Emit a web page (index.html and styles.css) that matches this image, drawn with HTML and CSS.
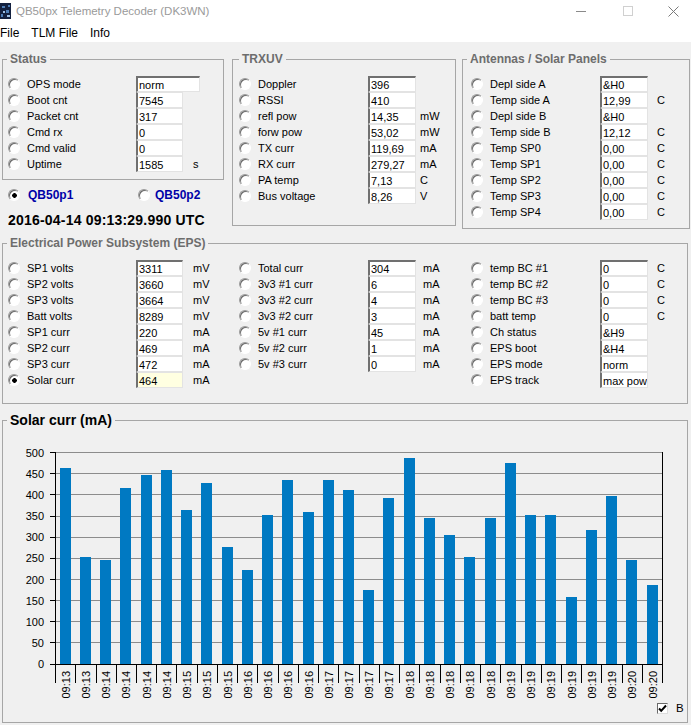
FILE: index.html
```html
<!DOCTYPE html>
<html lang="en">
<head>
<meta charset="utf-8">
<title>QB50px Telemetry Decoder (DK3WN)</title>
<link rel="stylesheet" href="styles.css">
</head>
<body>
<header class="titlebar">
  <svg class="appicon" width="14" height="18" viewBox="0 0 14 18">
    <rect x="0" y="1" width="11" height="16" fill="#14213f"/>
    <path d="M2 4h3v2H2zM6 8h3v3H6zM1 12h2v3H1zM8 3h2v2H8z" fill="#4f7fb8"/>
    <path d="M3 9h2v2H3zM7 13h3v2H7z" fill="#9fc0e4"/>
  </svg>
  <span class="title">QB50px Telemetry Decoder (DK3WN)</span>
  <div class="winctrls">
    <svg class="wc-min" width="10" height="10" viewBox="0 0 10 10"><path d="M0 5.5H10" stroke="#8a8a8a"/></svg>
    <svg class="wc-max" width="10" height="10" viewBox="0 0 10 10"><rect x=".5" y=".5" width="9" height="9" fill="none" stroke="#d0d0d0"/></svg>
    <svg class="wc-close" width="11" height="11" viewBox="0 0 11 11"><path d="M.5.5l10 10M10.5.5l-10 10" stroke="#7a7a7a"/></svg>
  </div>
</header>
<nav class="menubar"><span>File</span><span>TLM File</span><span>Info</span></nav>

<main class="form">
  <div class="toprow">
    <div class="leftcol">
      <fieldset class="group g-status">
        <legend>Status</legend>
        <div class="rows">
          <div class="row"><span class="radio"></span><span class="lbl">OPS mode</span><span class="fld wide">norm</span></div>
          <div class="row"><span class="radio"></span><span class="lbl">Boot cnt</span><span class="fld">7545</span></div>
          <div class="row"><span class="radio"></span><span class="lbl">Packet cnt</span><span class="fld">317</span></div>
          <div class="row"><span class="radio"></span><span class="lbl">Cmd rx</span><span class="fld">0</span></div>
          <div class="row"><span class="radio"></span><span class="lbl">Cmd valid</span><span class="fld">0</span></div>
          <div class="row"><span class="radio"></span><span class="lbl">Uptime</span><span class="fld">1585</span><span class="unit">s</span></div>
        </div>
      </fieldset>
      <div class="sats">
        <div class="sat"><span class="radio on"></span><span class="satname">QB50p1</span></div>
        <div class="sat"><span class="radio"></span><span class="satname">QB50p2</span></div>
      </div>
      <div class="stamp">2016-04-14 09:13:29.990 UTC</div>
    </div>

    <fieldset class="group g-trx">
      <legend>TRXUV</legend>
      <div class="rows">
        <div class="row"><span class="radio"></span><span class="lbl">Doppler</span><span class="fld">396</span></div>
        <div class="row"><span class="radio"></span><span class="lbl">RSSI</span><span class="fld">410</span></div>
        <div class="row"><span class="radio"></span><span class="lbl">refl pow</span><span class="fld">14,35</span><span class="unit">mW</span></div>
        <div class="row"><span class="radio"></span><span class="lbl">forw pow</span><span class="fld">53,02</span><span class="unit">mW</span></div>
        <div class="row"><span class="radio"></span><span class="lbl">TX curr</span><span class="fld">119,69</span><span class="unit">mA</span></div>
        <div class="row"><span class="radio"></span><span class="lbl">RX curr</span><span class="fld">279,27</span><span class="unit">mA</span></div>
        <div class="row"><span class="radio"></span><span class="lbl">PA temp</span><span class="fld">7,13</span><span class="unit">C</span></div>
        <div class="row"><span class="radio"></span><span class="lbl">Bus voltage</span><span class="fld">8,26</span><span class="unit">V</span></div>
      </div>
    </fieldset>

    <fieldset class="group g-ant">
      <legend>Antennas / Solar Panels</legend>
      <div class="rows">
        <div class="row"><span class="radio"></span><span class="lbl">Depl side A</span><span class="fld">&amp;H0</span></div>
        <div class="row"><span class="radio"></span><span class="lbl">Temp side A</span><span class="fld">12,99</span><span class="unit">C</span></div>
        <div class="row"><span class="radio"></span><span class="lbl">Depl side B</span><span class="fld">&amp;H0</span></div>
        <div class="row"><span class="radio"></span><span class="lbl">Temp side B</span><span class="fld">12,12</span><span class="unit">C</span></div>
        <div class="row"><span class="radio"></span><span class="lbl">Temp SP0</span><span class="fld">0,00</span><span class="unit">C</span></div>
        <div class="row"><span class="radio"></span><span class="lbl">Temp SP1</span><span class="fld">0,00</span><span class="unit">C</span></div>
        <div class="row"><span class="radio"></span><span class="lbl">Temp SP2</span><span class="fld">0,00</span><span class="unit">C</span></div>
        <div class="row"><span class="radio"></span><span class="lbl">Temp SP3</span><span class="fld">0,00</span><span class="unit">C</span></div>
        <div class="row"><span class="radio"></span><span class="lbl">Temp SP4</span><span class="fld">0,00</span><span class="unit">C</span></div>
      </div>
    </fieldset>
  </div>

  <fieldset class="group g-eps">
    <legend>Electrical Power Subsystem (EPS)</legend>
    <div class="cols">
      <div class="rows col1">
        <div class="row"><span class="radio"></span><span class="lbl">SP1 volts</span><span class="fld">3311</span><span class="unit">mV</span></div>
        <div class="row"><span class="radio"></span><span class="lbl">SP2 volts</span><span class="fld">3660</span><span class="unit">mV</span></div>
        <div class="row"><span class="radio"></span><span class="lbl">SP3 volts</span><span class="fld">3664</span><span class="unit">mV</span></div>
        <div class="row"><span class="radio"></span><span class="lbl">Batt volts</span><span class="fld">8289</span><span class="unit">mV</span></div>
        <div class="row"><span class="radio"></span><span class="lbl">SP1 curr</span><span class="fld">220</span><span class="unit">mA</span></div>
        <div class="row"><span class="radio"></span><span class="lbl">SP2 curr</span><span class="fld">469</span><span class="unit">mA</span></div>
        <div class="row"><span class="radio"></span><span class="lbl">SP3 curr</span><span class="fld">472</span><span class="unit">mA</span></div>
        <div class="row"><span class="radio on"></span><span class="lbl">Solar curr</span><span class="fld sel">464</span><span class="unit">mA</span></div>
      </div>
      <div class="rows col2">
        <div class="row"><span class="radio"></span><span class="lbl">Total curr</span><span class="fld">304</span><span class="unit">mA</span></div>
        <div class="row"><span class="radio"></span><span class="lbl">3v3 #1 curr</span><span class="fld">6</span><span class="unit">mA</span></div>
        <div class="row"><span class="radio"></span><span class="lbl">3v3 #2 curr</span><span class="fld">4</span><span class="unit">mA</span></div>
        <div class="row"><span class="radio"></span><span class="lbl">3v3 #2 curr</span><span class="fld">3</span><span class="unit">mA</span></div>
        <div class="row"><span class="radio"></span><span class="lbl">5v #1 curr</span><span class="fld">45</span><span class="unit">mA</span></div>
        <div class="row"><span class="radio"></span><span class="lbl">5v #2 curr</span><span class="fld">1</span><span class="unit">mA</span></div>
        <div class="row"><span class="radio"></span><span class="lbl">5v #3 curr</span><span class="fld">0</span><span class="unit">mA</span></div>
      </div>
      <div class="rows col3">
        <div class="row"><span class="radio"></span><span class="lbl">temp BC #1</span><span class="fld">0</span><span class="unit">C</span></div>
        <div class="row"><span class="radio"></span><span class="lbl">temp BC #2</span><span class="fld">0</span><span class="unit">C</span></div>
        <div class="row"><span class="radio"></span><span class="lbl">temp BC #3</span><span class="fld">0</span><span class="unit">C</span></div>
        <div class="row"><span class="radio"></span><span class="lbl">batt temp</span><span class="fld">0</span><span class="unit">C</span></div>
        <div class="row"><span class="radio"></span><span class="lbl">Ch status</span><span class="fld">&amp;H9</span></div>
        <div class="row"><span class="radio"></span><span class="lbl">EPS boot</span><span class="fld">&amp;H4</span></div>
        <div class="row"><span class="radio"></span><span class="lbl">EPS mode</span><span class="fld">norm</span></div>
        <div class="row"><span class="radio"></span><span class="lbl">EPS track</span><span class="fld">max pow</span></div>
      </div>
    </div>
  </fieldset>

  <fieldset class="group g-chart">
    <legend>Solar curr (mA)</legend>
    <svg class="plot" width="684" height="294" viewBox="3 428 684 294">
      <path class="grid" d="M55 452.5H662M55 473.5H662M55 494.5H662M55 516.5H662M55 537.5H662M55 558.5H662M55 579.5H662M55 600.5H662M55 621.5H662M55 642.5H662"/>
      <g class="bars">
        <rect x="60" y="468" width="11" height="196"/>
        <rect x="80" y="557" width="11" height="107"/>
        <rect x="100" y="560" width="11" height="104"/>
        <rect x="120" y="488" width="11" height="176"/>
        <rect x="141" y="475" width="11" height="189"/>
        <rect x="161" y="470" width="11" height="194"/>
        <rect x="181" y="510" width="11" height="154"/>
        <rect x="201" y="483" width="11" height="181"/>
        <rect x="222" y="547" width="11" height="117"/>
        <rect x="242" y="570" width="11" height="94"/>
        <rect x="262" y="515" width="11" height="149"/>
        <rect x="282" y="480" width="11" height="184"/>
        <rect x="303" y="512" width="11" height="152"/>
        <rect x="323" y="480" width="11" height="184"/>
        <rect x="343" y="490" width="11" height="174"/>
        <rect x="363" y="590" width="11" height="74"/>
        <rect x="383" y="498" width="11" height="166"/>
        <rect x="404" y="458" width="11" height="206"/>
        <rect x="424" y="518" width="11" height="146"/>
        <rect x="444" y="535" width="11" height="129"/>
        <rect x="464" y="557" width="11" height="107"/>
        <rect x="485" y="518" width="11" height="146"/>
        <rect x="505" y="463" width="11" height="201"/>
        <rect x="525" y="515" width="11" height="149"/>
        <rect x="545" y="515" width="11" height="149"/>
        <rect x="566" y="597" width="11" height="67"/>
        <rect x="586" y="530" width="11" height="134"/>
        <rect x="606" y="496" width="11" height="168"/>
        <rect x="626" y="560" width="11" height="104"/>
        <rect x="647" y="585" width="11" height="79"/>
      </g>
      <path class="axis" d="M55.5 452V683M55 664.5H663M662.5 452V683M50 452.5H55M50 473.5H55M50 494.5H55M50 516.5H55M50 537.5H55M50 558.5H55M50 579.5H55M50 600.5H55M50 621.5H55M50 642.5H55M50 664.5H55M75.5 664V683M96.5 664V683M116.5 664V683M136.5 664V683M156.5 664V683M176.5 664V683M197.5 664V683M217.5 664V683M237.5 664V683M257.5 664V683M278.5 664V683M298.5 664V683M318.5 664V683M338.5 664V683M359.5 664V683M379.5 664V683M399.5 664V683M419.5 664V683M440.5 664V683M460.5 664V683M480.5 664V683M500.5 664V683M521.5 664V683M541.5 664V683M561.5 664V683M581.5 664V683M601.5 664V683M622.5 664V683M642.5 664V683"/>
      <g class="ylab">
        <text x="44" y="453">500</text>
        <text x="44" y="474">450</text>
        <text x="44" y="495">400</text>
        <text x="44" y="516">350</text>
        <text x="44" y="537">300</text>
        <text x="44" y="558">250</text>
        <text x="44" y="580">200</text>
        <text x="44" y="601">150</text>
        <text x="44" y="622">100</text>
        <text x="44" y="643">50</text>
        <text x="44" y="664">0</text>
      </g>
      <g class="xlab">
        <text transform="translate(65.5 671) rotate(-90)">09:13</text>
        <text transform="translate(85.5 671) rotate(-90)">09:13</text>
        <text transform="translate(105.5 671) rotate(-90)">09:14</text>
        <text transform="translate(125.5 671) rotate(-90)">09:14</text>
        <text transform="translate(146.5 671) rotate(-90)">09:14</text>
        <text transform="translate(166.5 671) rotate(-90)">09:14</text>
        <text transform="translate(186.5 671) rotate(-90)">09:15</text>
        <text transform="translate(206.5 671) rotate(-90)">09:15</text>
        <text transform="translate(227.5 671) rotate(-90)">09:15</text>
        <text transform="translate(247.5 671) rotate(-90)">09:16</text>
        <text transform="translate(267.5 671) rotate(-90)">09:16</text>
        <text transform="translate(287.5 671) rotate(-90)">09:16</text>
        <text transform="translate(308.5 671) rotate(-90)">09:16</text>
        <text transform="translate(328.5 671) rotate(-90)">09:17</text>
        <text transform="translate(348.5 671) rotate(-90)">09:17</text>
        <text transform="translate(368.5 671) rotate(-90)">09:17</text>
        <text transform="translate(388.5 671) rotate(-90)">09:17</text>
        <text transform="translate(409.5 671) rotate(-90)">09:18</text>
        <text transform="translate(429.5 671) rotate(-90)">09:18</text>
        <text transform="translate(449.5 671) rotate(-90)">09:18</text>
        <text transform="translate(469.5 671) rotate(-90)">09:18</text>
        <text transform="translate(490.5 671) rotate(-90)">09:18</text>
        <text transform="translate(510.5 671) rotate(-90)">09:19</text>
        <text transform="translate(530.5 671) rotate(-90)">09:19</text>
        <text transform="translate(550.5 671) rotate(-90)">09:19</text>
        <text transform="translate(571.5 671) rotate(-90)">09:19</text>
        <text transform="translate(591.5 671) rotate(-90)">09:19</text>
        <text transform="translate(611.5 671) rotate(-90)">09:19</text>
        <text transform="translate(631.5 671) rotate(-90)">09:20</text>
        <text transform="translate(652.5 671) rotate(-90)">09:20</text>
      </g>
    </svg>
    <label class="toggle">
      <span class="cb"><svg width="9" height="9" viewBox="0 0 9 9"><path d="M1 4.5l2.2 2.3L8 1.5" fill="none" stroke="#000" stroke-width="2"/></svg></span>
      <span class="cbtext">B</span>
    </label>
  </fieldset>
</main>
</body>
</html>
```

FILE: styles.css
```css
* { box-sizing: border-box; }

html, body {
  margin: 0;
  padding: 0;
}

body {
  width: 691px;
  height: 725px;
  overflow: hidden;
  background: #f0f0f0;
  color: #000;
  font-family: "Liberation Sans", Arial, sans-serif;
  font-size: 11px;
}

/* ---------- title bar & menu ---------- */
.titlebar {
  height: 22px;
  background: #fff;
  display: flex;
  align-items: center;
}
.appicon { flex: none; display: block; }
.title {
  margin-left: 2px;
  color: #9a9a9a;
  font-size: 11.5px;
  white-space: nowrap;
}
.winctrls {
  margin-left: auto;
  padding-right: 12px;
  display: flex;
  align-items: center;
}
.winctrls svg { display: block; }
.wc-max { margin-left: 37px; }
.wc-close { margin-left: 35px; }

.menubar {
  height: 20px;
  background: #fff;
  display: flex;
  align-items: center;
  padding-top: 2px;
  font-size: 12px;
  gap: 12px;
}

/* ---------- form ---------- */
.form {
  padding: 10px 0 0 2px;
}

.toprow {
  display: flex;
  align-items: flex-start;
}

.group {
  margin: 0;
  padding: 0;
  min-width: 0;
  border: 1px solid #a6a6a6;
}
.group > legend {
  margin-left: 4px;
  padding: 0 3px;
  font-size: 12px;
  line-height: 14px;
  font-weight: bold;
  color: #6d6d6d;
}

.leftcol { width: 222px; flex: none; }
.g-status { width: 222px; }
.g-trx { width: 224px; margin-left: 8px; flex: none; }
.g-trx > legend { margin-left: 6px; }
.g-ant { width: 228px; margin-left: 6px; flex: none; }

.rows { padding-top: 10px; }
.g-status .rows { padding-bottom: 7px; }
.g-trx .rows { padding-bottom: 21px; }
.g-ant .rows { padding-bottom: 8px; }

.g-status, .col1 { --rm: 5px; --lw: 109px; --fw: 47px; --um: 10px; }
.g-trx { --rm: 6px; --lw: 110px; --fw: 48px; --um: 4px; }
.g-ant, .col3 { --rm: 8px; --lw: 110px; --fw: 48px; --um: 9px; }
.col2 { --rm: 6px; --lw: 110px; --fw: 48px; --um: 7px; }

.row {
  display: flex;
  align-items: center;
  height: 16px;
  white-space: nowrap;
}
.row .radio { margin-left: var(--rm); }
.row .lbl { margin-left: 7px; width: var(--lw); flex: none; }
.row .unit { margin-left: var(--um); }

.radio {
  flex: none;
  width: 12px;
  height: 12px;
  border-radius: 50%;
  background: #fff;
  border: 1px solid;
  border-color: #9a9a9a #ffffff #ffffff #9a9a9a;
  box-shadow: inset 1px 1px 0 #6a6a6a;
}
.radio.on {
  background: radial-gradient(circle at 55% 55%, #000 0 2px, #fff 2.6px);
}

.fld {
  flex: none;
  width: var(--fw);
  height: 16px;
  background: #fff;
  border-left: 2px solid #707070;
  border-top: 1px solid #e3e3e3;
  border-right: 1px solid #e3e3e3;
  border-bottom: 1px solid #e3e3e3;
  padding: 2px 0 0 1px;
  font-size: 11px;
  line-height: 13px;
  overflow: hidden;
}
.row:first-child .fld {
  border-top: 2px solid #707070;
  padding-top: 1px;
}
.fld.wide { width: 64px; }
.fld.sel { background: #ffffe1; }

/* ---------- satellite selector & timestamp ---------- */
.sats {
  display: flex;
  align-items: center;
  height: 16px;
  margin-top: 7px;
}
.sat {
  display: flex;
  align-items: center;
}
.sat:first-child { width: 136px; padding-left: 6px; }
.satname {
  font-size: 12px;
  font-weight: bold;
  color: #0000a8;
}
.sat:first-child .satname { margin-left: 8px; }
.sat:last-child .satname { margin-left: 5px; }

.stamp {
  margin-top: 8px;
  padding-left: 6px;
  font-size: 14px;
  line-height: 18px;
  font-weight: bold;
  letter-spacing: 0.2px;
  white-space: nowrap;
}

/* ---------- EPS ---------- */
.g-eps {
  width: 686px;
  margin-top: 7px;
}
.cols {
  display: flex;
  padding-bottom: 15px;
}
.col1, .col2 { width: 230px; flex: none; }
.col3 { flex: 1; }

/* ---------- chart ---------- */
.g-chart {
  position: relative;
  width: 686px;
  margin-top: 8px;
}
.g-chart > legend {
  font-size: 14px;
  line-height: 16px;
  color: #000;
}
.plot { display: block; }
.plot .grid { stroke: #8c8c8c; stroke-width: 1; fill: none; }
.plot .bars rect { fill: #0079c2; }
.plot .axis { stroke: #000; stroke-width: 1; fill: none; }
.plot text {
  font-family: "Liberation Sans", Arial, sans-serif;
  font-size: 11px;
  fill: #000;
  dominant-baseline: central;
  text-anchor: end;
}

.toggle {
  position: absolute;
  left: 654px;
  bottom: 8px;
  display: flex;
  align-items: center;
  font-size: 11.5px;
}
.cb {
  width: 11px;
  height: 11px;
  background: #fff;
  border: 1px solid;
  border-color: #6a6a6a #dcdcdc #dcdcdc #6a6a6a;
  display: flex;
  align-items: center;
  justify-content: center;
}
.cb svg { display: block; }
.cbtext { margin-left: 8px; }
```
